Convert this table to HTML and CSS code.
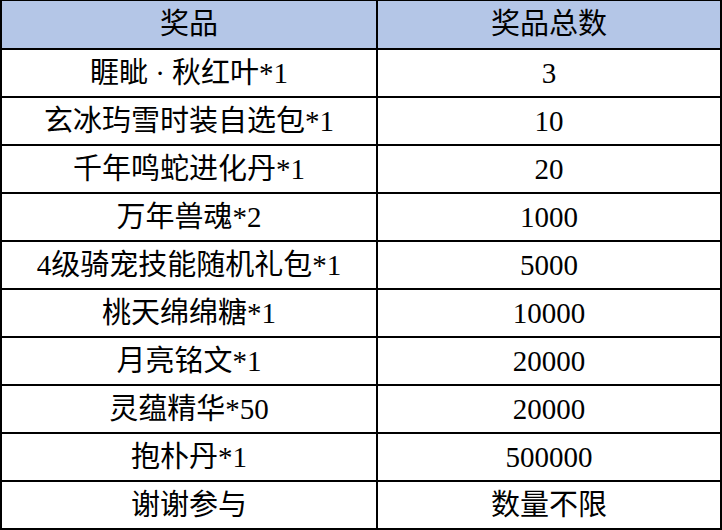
FILE: index.html
```html
<!DOCTYPE html>
<html lang="zh-CN">
<head>
<meta charset="utf-8">
<title>奖品</title>
<link rel="stylesheet" href="styles.css">
</head>
<body>
<div class="prize-table">
  <div class="cell head">奖品</div>
  <div class="cell head">奖品总数</div>
  <div class="cell">睚眦 · 秋红叶*1</div>
  <div class="cell">3</div>
  <div class="cell">玄冰玙雪时装自选包*1</div>
  <div class="cell">10</div>
  <div class="cell">千年鸣蛇进化丹*1</div>
  <div class="cell">20</div>
  <div class="cell">万年兽魂*2</div>
  <div class="cell">1000</div>
  <div class="cell">4级骑宠技能随机礼包*1</div>
  <div class="cell">5000</div>
  <div class="cell">桃天绵绵糖*1</div>
  <div class="cell">10000</div>
  <div class="cell">月亮铭文*1</div>
  <div class="cell">20000</div>
  <div class="cell">灵蕴精华*50</div>
  <div class="cell">20000</div>
  <div class="cell">抱朴丹*1</div>
  <div class="cell">500000</div>
  <div class="cell">谢谢参与</div>
  <div class="cell">数量不限</div>
</div>
</body>
</html>
```
FILE: styles.css
```css
html, body {
  margin: 0;
  padding: 0;
  background: #ffffff;
}

.prize-table {
  width: 722px;
  height: 530px;
  box-sizing: border-box;
  background: #000000;
  padding: 1px 2px 2px 2px;
  display: grid;
  grid-template-columns: 374px 342px;
  grid-template-rows: 47px repeat(10, 46px);
  gap: 2px;
  font-family: "Liberation Serif", "Noto Sans CJK SC", serif;
  font-size: 29px;
  color: #000000;
}

.cell {
  background: #ffffff;
  display: flex;
  align-items: center;
  justify-content: center;
  white-space: nowrap;
  line-height: 1;
}

.cell.head {
  background: #b4c6e7;
}
```
